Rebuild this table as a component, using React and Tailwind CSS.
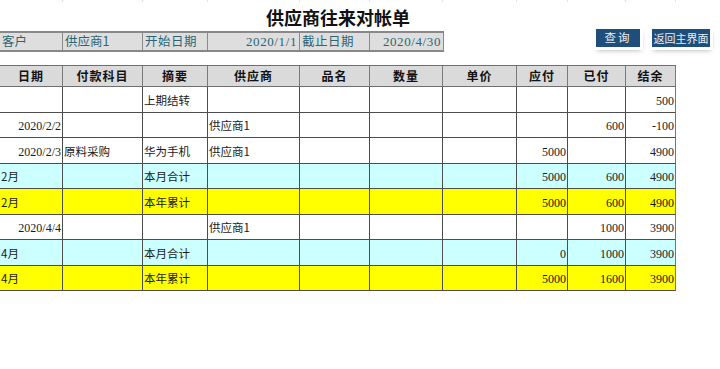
import clsx from 'clsx';

const cols = 'grid grid-cols-[63px_80px_65px_92px_70px_73px_74px_51px_58px_50px] w-[676px]';
const cjk = "font-['Noto_Sans_CJK_SC',sans-serif]";
const num = "font-['Liberation_Serif','Noto_Sans_CJK_SC',serif]";

const headers = ['日期', '付款科目', '摘要', '供应商', '品名', '数量', '单价', '应付', '已付', '结余'];

// [日期, 付款科目, 摘要, 供应商, 品名, 数量, 单价, 应付, 已付, 结余, 类型]
const rows = [
  ['', '', '上期结转', '', '', '', '', '', '', '500', 'plain'],
  ['2020/2/2', '', '', '供应商1', '', '', '', '', '600', '-100', 'plain'],
  ['2020/2/3', '原料采购', '华为手机', '供应商1', '', '', '', '5000', '', '4900', 'plain'],
  ['2月', '', '本月合计', '', '', '', '', '5000', '600', '4900', 'month'],
  ['2月', '', '本年累计', '', '', '', '', '5000', '600', '4900', 'year'],
  ['2020/4/4', '', '', '供应商1', '', '', '', '', '1000', '3900', 'plain'],
  ['4月', '', '本月合计', '', '', '', '', '0', '1000', '3900', 'month'],
  ['4月', '', '本年累计', '', '', '', '', '5000', '1600', '3900', 'year'],
];

const rowBg = {
  plain: 'bg-white',
  month: 'bg-[#ccffff]',
  year: 'bg-[#ffff00]',
};

const InfoCell = ({ children, w, right, last }) => (
  <div
    className={clsx(
      'flex h-full items-center px-[2px] text-[12.5px] text-[#2b6574]',
      w,
      right ? 'justify-end' : 'justify-start',
      !last && 'border-r border-[#8a8a8a]'
    )}
  >
    {children}
  </div>
);

const Cell = ({ value, index }) => {
  const isDate = index === 0 && /^\d{4}\//.test(value);
  const isNum = index >= 5;
  const isMonth = index === 0 && !isDate && value;
  return (
    <div
      className={clsx(
        'flex items-center border-b border-r border-[#4d4d4d] pt-[2px] text-[#1a1a1a]',
        index === 9 && 'border-r-[#777]',
        isDate || isNum ? 'justify-end pr-[1px]' : 'justify-start pl-[1px]',
        isDate || isNum ? `${num} text-[12px]` : `${cjk} text-[11.5px]`,
        isMonth && 'pl-0'
      )}
    >
      {value}
    </div>
  );
};

export default function App() {
  return (
    <div className={clsx('h-[369px] w-[720px] overflow-hidden bg-white', cjk)}>
      {/* faint grid lines of the row above */}
      <div className={clsx(cols, 'h-[2px]')}>
        {headers.map((h) => (
          <div key={h} className="border-r border-[#e2e2e2]" />
        ))}
      </div>

      <div className="flex h-[26px] w-[676px] items-start justify-center pt-[4px]">
        <h1 className="text-[18px] font-semibold leading-[22px] text-[#111]">供应商往来对帐单</h1>
      </div>

      <div className="flex items-start pr-[10px]">
        <div className="mt-[3px] flex h-[21px] w-[444px] border-y-2 border-r border-[#888] bg-[#dedede]">
          <InfoCell w="w-[63px]">客户</InfoCell>
          <InfoCell w="w-[80px]">供应商1</InfoCell>
          <InfoCell w="w-[65px]">
            <span className="tracking-[0.5px]">开始日期</span>
          </InfoCell>
          <InfoCell w="w-[92px]" right>
            <span className={clsx(num, 'text-[13px] tracking-[0.6px]')}>2020/1/1</span>
          </InfoCell>
          <InfoCell w="w-[70px]">
            <span className="tracking-[0.5px]">截止日期</span>
          </InfoCell>
          <InfoCell w="w-[73px]" right last>
            <span className={clsx(num, 'text-[13px] tracking-[0.6px]')}>2020/4/30</span>
          </InfoCell>
        </div>

        <div className="ml-auto mt-[1px] flex gap-[12px]">
          <button
            type="button"
            className="flex h-[18px] w-[44px] items-center justify-center bg-[#1f4e7a] text-[11.5px] tracking-[2px] text-[#e8eef6] ring-[3px] ring-white shadow-[1px_3px_5px_rgba(0,0,0,0.35)]"
          >
            查询
          </button>
          <button
            type="button"
            className="flex h-[18px] w-[58px] items-center justify-center bg-[#1f4e7a] text-[11px] text-[#e8eef6] ring-[3px] ring-white shadow-[1px_3px_5px_rgba(0,0,0,0.35)]"
          >
            返回主界面
          </button>
        </div>
      </div>

      <div className="mt-[13px]">
        <div className={clsx(cols, 'h-[22px] border-y border-[#6f6f6f] bg-[#dadada]')}>
          {headers.map((h) => (
            <div
              key={h}
              className="flex items-center justify-center border-r border-[#7a7a7a] text-[12px] font-bold tracking-[1px] text-[#111]"
            >
              {h}
            </div>
          ))}
        </div>

        {rows.map((r, ri) => (
          <div
            key={ri}
            className={clsx(cols, rowBg[r[10]], ri % 2 === 0 ? 'h-[26px]' : 'h-[25px]')}
          >
            {r.slice(0, 10).map((v, i) => (
              <Cell key={i} value={v} index={i} />
            ))}
          </div>
        ))}
      </div>
    </div>
  );
}
